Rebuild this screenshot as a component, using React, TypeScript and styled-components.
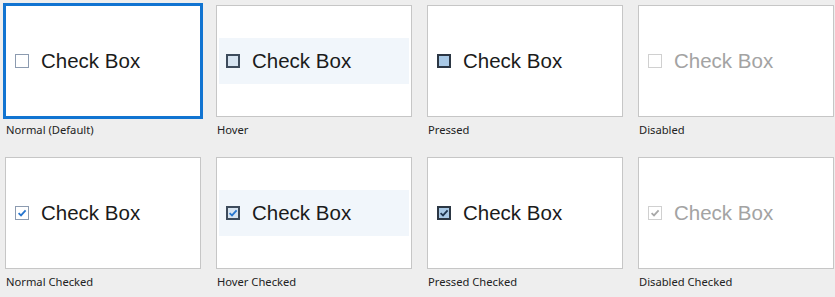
import React from "react";
import styled, { createGlobalStyle, css } from "styled-components";

type Mode = "normal" | "hover" | "pressed" | "disabled";

const GlobalStyle = createGlobalStyle`
  html, body {
    margin: 0;
    padding: 0;
    background: #eeeeee;
  }
  body {
    font-family: "Noto Sans", "Open Sans", sans-serif;
  }
`;

const Grid = styled.div`
  display: grid;
  grid-template-columns: repeat(4, 196px);
  grid-auto-rows: 152px;
  column-gap: 15px;
  padding: 5px 0 0 5px;
`;

const Cell = styled.div`
  display: flex;
  flex-direction: column;
`;

const Panel = styled.div<{ $focused?: boolean }>`
  height: 112px;
  box-sizing: border-box;
  background: #ffffff;
  border: 1px solid #c6c6c6;
  display: flex;
  align-items: center;
  padding: 0 2px 1px;
  ${(p) =>
    p.$focused &&
    css`
      border-color: #1174d1;
      box-shadow: 0 0 0 2px #1174d1;
    `}
`;

const Row = styled.div<{ $mode: Mode }>`
  flex: 1;
  height: 46px;
  display: flex;
  align-items: center;
  gap: 12px;
  padding-left: 7px;
  background: ${(p) => (p.$mode === "hover" ? "#f1f6fb" : "transparent")};
  font-family: "Liberation Sans", Arial, sans-serif;
  font-size: 20.5px;
  color: ${(p) => (p.$mode === "disabled" ? "#a3a3a3" : "#1b1b1b")};
`;

const Caption = styled.div`
  margin-top: 5px;
  padding-left: 1px;
  font-size: 11.2px;
  line-height: 16px;
  color: #222222;
`;

const boxColors: Record<Mode, { stroke: string; fill: string; check: string }> = {
  normal: { stroke: "#8c9bb0", fill: "#ffffff", check: "#2776cf" },
  hover: { stroke: "#3d4b5c", fill: "#d7e4f1", check: "#2776cf" },
  pressed: { stroke: "#2c3744", fill: "#a9c9e6", check: "#1e3550" },
  disabled: { stroke: "#d0d0d0", fill: "#ffffff", check: "#a8a8a8" },
};

const Box = ({ mode, checked }: { mode: Mode; checked: boolean }) => {
  const c = boxColors[mode];
  const strong = mode === "hover" || mode === "pressed";
  return (
    <svg width="14" height="14" viewBox="0 0 14 14">
      <rect
        x={strong ? 1 : 0.5}
        y={strong ? 1 : 0.5}
        width={strong ? 12 : 13}
        height={strong ? 12 : 13}
        fill={c.fill}
        stroke={c.stroke}
        strokeWidth={strong ? 2 : 1}
      />
      {checked && (
        <path
          d="M3.6 7.2 L6 9.4 L10.6 4.4"
          fill="none"
          stroke={c.check}
          strokeWidth="1.8"
        />
      )}
    </svg>
  );
};

const states: { label: string; mode: Mode; checked: boolean; focused?: boolean }[] = [
  { label: "Normal (Default)", mode: "normal", checked: false, focused: true },
  { label: "Hover", mode: "hover", checked: false },
  { label: "Pressed", mode: "pressed", checked: false },
  { label: "Disabled", mode: "disabled", checked: false },
  { label: "Normal Checked", mode: "normal", checked: true },
  { label: "Hover Checked", mode: "hover", checked: true },
  { label: "Pressed Checked", mode: "pressed", checked: true },
  { label: "Disabled Checked", mode: "disabled", checked: true },
];

export default function App() {
  return (
    <>
      <GlobalStyle />
      <Grid>
        {states.map((s) => (
          <Cell key={s.label}>
            <Panel $focused={s.focused}>
              <Row $mode={s.mode}>
                <Box mode={s.mode} checked={s.checked} />
                <span>Check Box</span>
              </Row>
            </Panel>
            <Caption>{s.label}</Caption>
          </Cell>
        ))}
      </Grid>
    </>
  );
}
